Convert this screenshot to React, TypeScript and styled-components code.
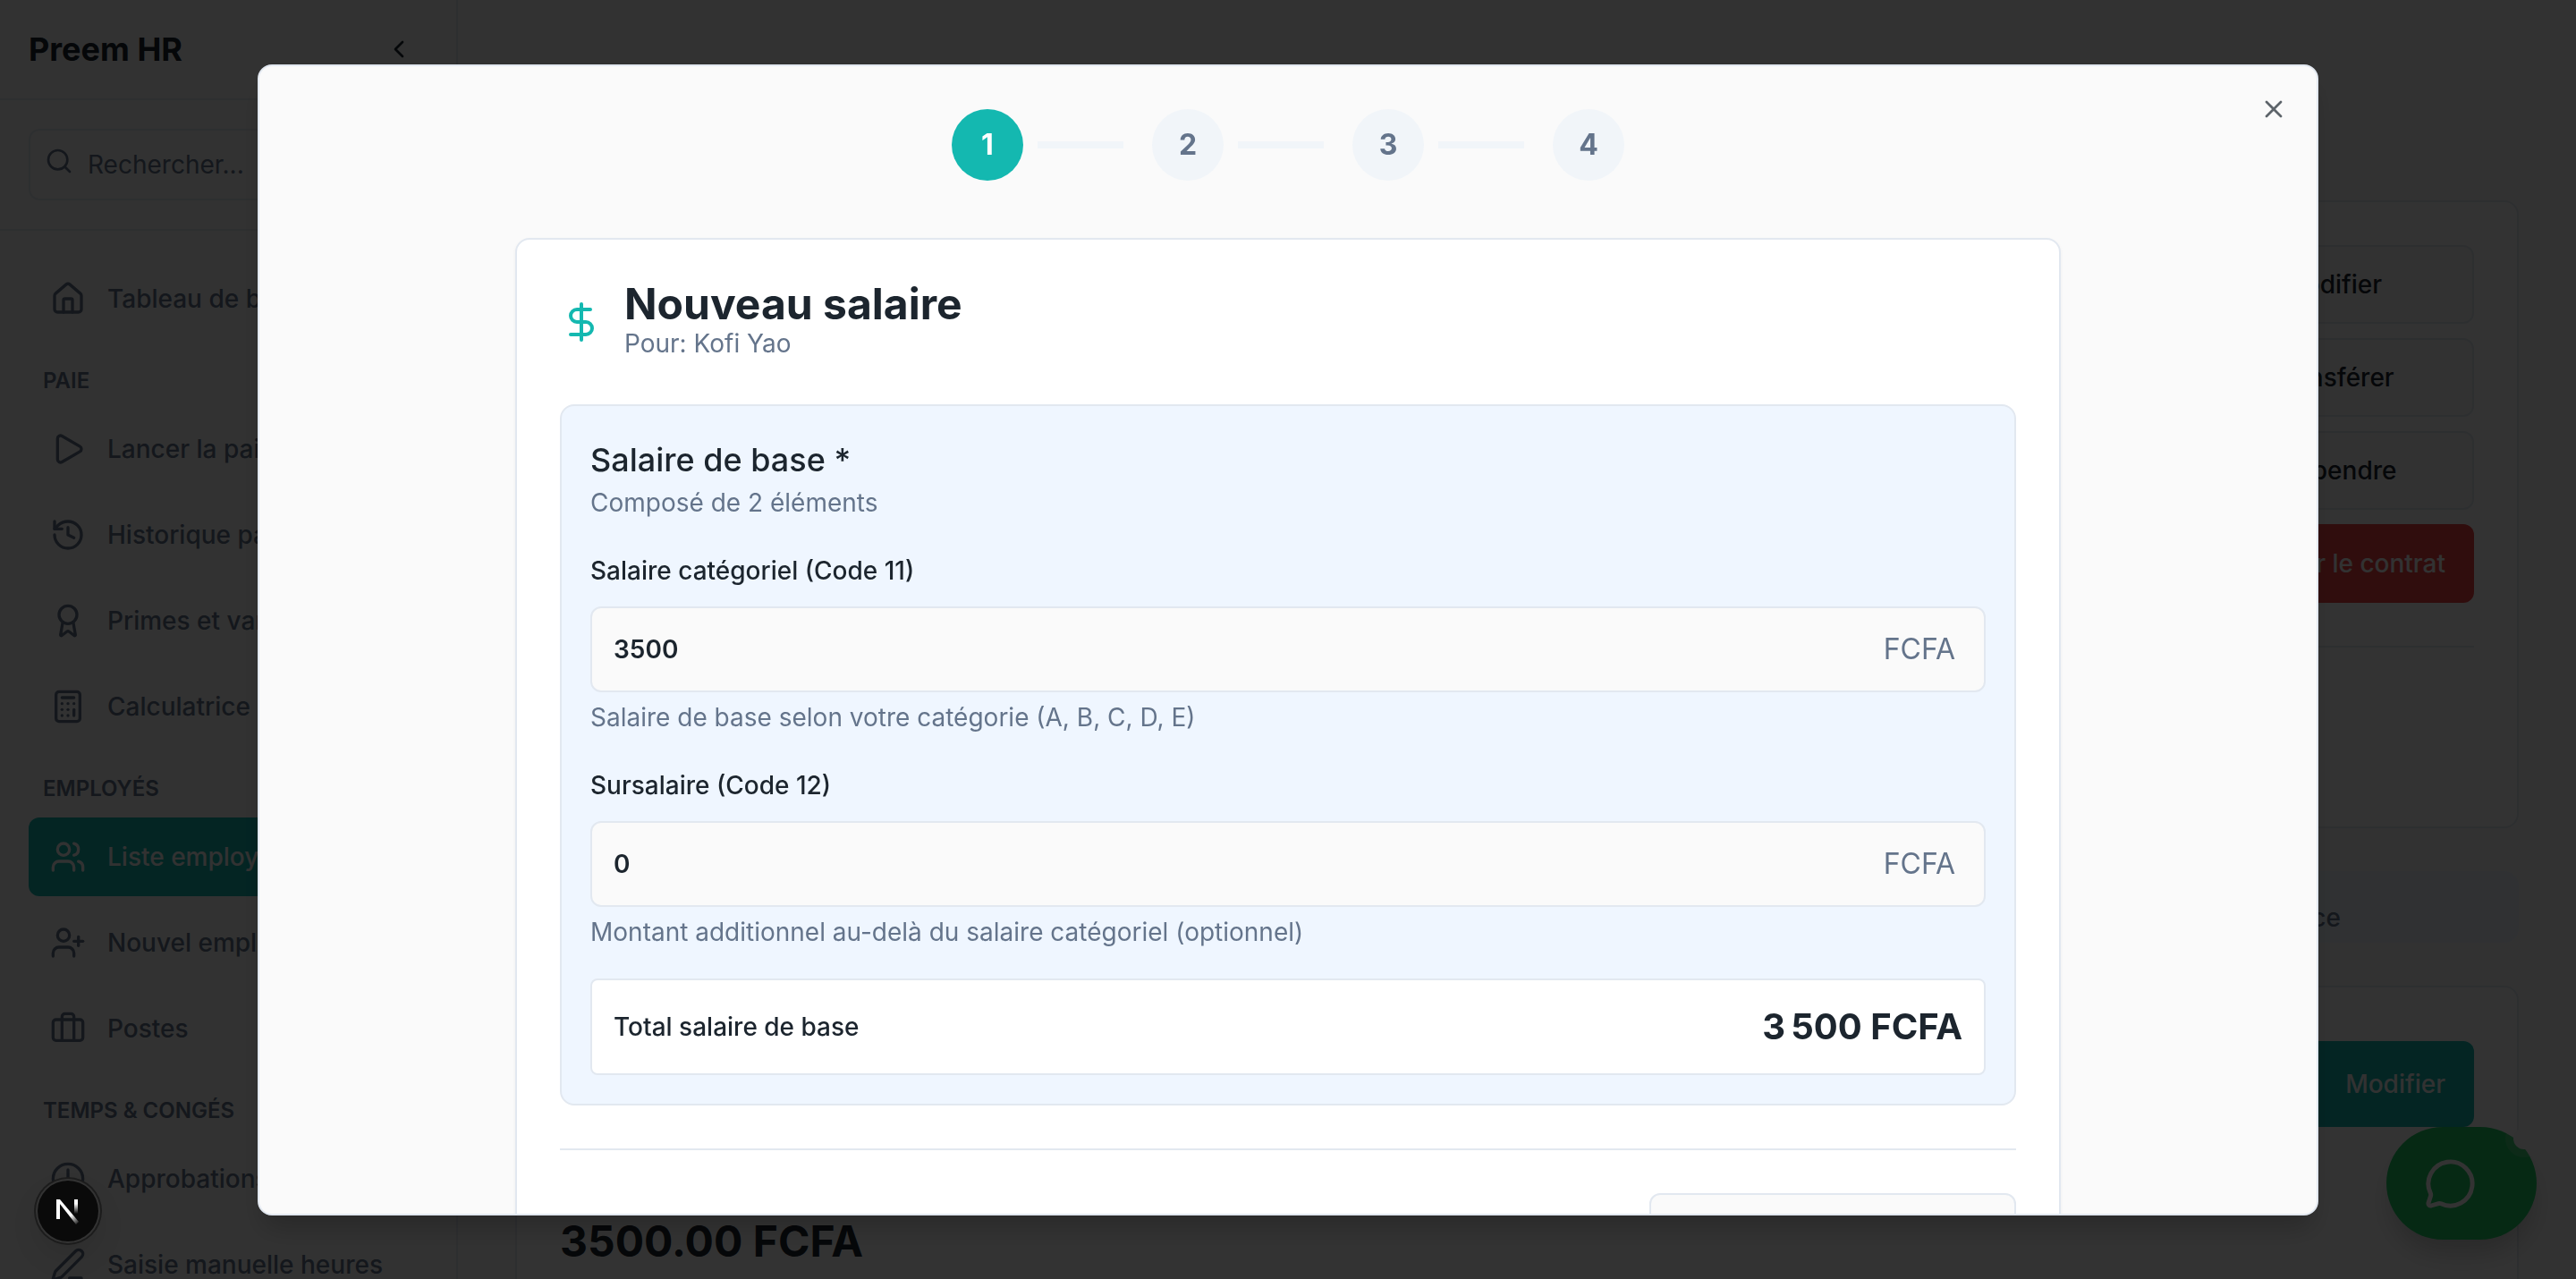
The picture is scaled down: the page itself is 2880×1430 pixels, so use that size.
import React from "react";
import styled, { createGlobalStyle, css } from "styled-components";
import {
  ArrowRightLeft,
  Award,
  Ban,
  Briefcase,
  Calculator,
  ChevronLeft,
  Clock,
  DollarSign,
  History,
  House,
  type LucideIcon,
  MessageCircle,
  Pencil,
  PenLine,
  Play,
  Plus,
  Search,
  UserPlus,
  Users,
  UserX,
  X,
} from "lucide-react";

const color = {
  page: "#fafafa",
  card: "#ffffff",
  ink: "#1c252e",
  muted: "#64748b",
  line: "#e2e8f0",
  soft: "#f1f5f9",
  teal: "#14b8b0",
  tint: "#eff6ff",
  danger: "#ef4444",
  chat: "#22cc66",
};

const GlobalStyle = createGlobalStyle`
  *, *::before, *::after { box-sizing: border-box; }
  body {
    margin: 0;
    background: ${color.page};
    color: ${color.ink};
    font-family: Inter, "Liberation Sans", sans-serif;
    font-size: 28px;
    line-height: 40px;
  }
  h1, h2, h3, p { margin: 0; }
  button, input { font: inherit; color: inherit; }
  button { cursor: pointer; }
  svg { flex-shrink: 0; display: block; }
`;

/* ---------- Application shell ---------- */

const Shell = styled.div`
  display: flex;
  height: 100vh;
  overflow: hidden;
`;

const Sidebar = styled.aside`
  flex: 0 0 512px;
  display: flex;
  flex-direction: column;
  border-right: 2px solid ${color.line};
  overflow: hidden;
`;

const SidebarHeader = styled.header`
  flex: none;
  display: flex;
  align-items: center;
  justify-content: space-between;
  height: 112px;
  padding: 0 32px;
  border-bottom: 2px solid ${color.line};
`;

const Brand = styled.h1`
  font-size: 36px;
  line-height: 56px;
  font-weight: 700;
`;

const CollapseButton = styled.button`
  display: grid;
  place-items: center;
  width: 64px;
  height: 64px;
  padding: 0;
  border: 0;
  border-radius: 12px;
  background: none;
`;

const SearchBlock = styled.div`
  flex: none;
  padding: 32px;
  border-bottom: 2px solid ${color.line};
`;

const SearchBox = styled.label`
  display: flex;
  align-items: center;
  gap: 16px;
  height: 80px;
  padding: 0 16px;
  border: 2px solid ${color.line};
  border-radius: 12px;
  color: ${color.muted};

  svg {
    margin-bottom: 8px;
  }
`;

const SearchInput = styled.input`
  flex: 1;
  min-width: 0;
  padding: 0;
  border: 0;
  outline: 0;
  background: none;

  &::placeholder {
    color: ${color.muted};
    opacity: 1;
  }
`;

const Nav = styled.nav`
  display: flex;
  flex-direction: column;
  gap: 32px;
  padding: 32px;
`;

const NavSection = styled.section`
  display: flex;
  flex-direction: column;
  gap: 16px;
`;

const NavTitle = styled.h2`
  padding: 0 16px;
  font-size: 24px;
  line-height: 32px;
  font-weight: 600;
  color: ${color.muted};
`;

const NavList = styled.div`
  display: flex;
  flex-direction: column;
  gap: 8px;
`;

const NavLink = styled.a<{ $active?: boolean }>`
  display: flex;
  align-items: center;
  gap: 24px;
  height: 88px;
  padding: 0 24px;
  border-radius: 12px;
  font-weight: 500;
  white-space: nowrap;
  text-decoration: none;
  color: ${(p) => (p.$active ? color.page : color.muted)};
  background: ${(p) => (p.$active ? color.teal : "none")};
`;

const Main = styled.main`
  flex: 1;
  min-width: 0;
  display: flex;
  flex-direction: column;
  gap: 48px;
  padding: 64px;
  overflow: hidden;
`;

const PageHeading = styled.h2`
  font-size: 48px;
  line-height: 112px;
`;

const PageCard = styled.section`
  display: flex;
  flex-direction: column;
  gap: 48px;
  padding: 48px;
  background: ${color.card};
  border: 2px solid ${color.line};
  border-radius: 16px;
`;

const ActionStack = styled.div`
  align-self: flex-end;
  display: grid;
  gap: 16px;
`;

const PageButton = styled.button<{ $tone?: "teal" | "danger"; $tall?: boolean }>`
  display: flex;
  align-items: center;
  justify-content: center;
  gap: 16px;
  height: ${(p) => (p.$tall ? 96 : 88)}px;
  min-width: 208px;
  padding: 0 32px;
  border: 2px solid ${color.line};
  border-radius: 12px;
  background: ${color.page};
  font-weight: 500;
  white-space: nowrap;
  ${(p) =>
    p.$tone &&
    css`
      border: 0;
      justify-content: flex-end;
      color: ${color.page};
      background: ${p.$tone === "teal" ? color.teal : color.danger};
    `}
`;

const CardFacts = styled.div`
  min-height: 154px;
  padding-top: 48px;
  border-top: 2px solid ${color.line};
`;

const TabBar = styled.div`
  flex: none;
  display: grid;
  grid-template-columns: repeat(4, 1fr);
  align-items: start;
  height: 80px;
  padding: 8px;
  border-radius: 16px;
  background: ${color.tint};
`;

const Tab = styled.button`
  height: 88px;
  padding: 0;
  border: 0;
  background: none;
  font-weight: 500;
  color: ${color.muted};
`;

const CardHead = styled.div`
  display: flex;
  align-items: center;
  justify-content: space-between;
  height: 120px;
`;

const SalaryFact = styled.div`
  color: ${color.muted};
`;

const SalaryAmount = styled.p`
  font-size: 48px;
  line-height: 56px;
  font-weight: 700;
  color: ${color.ink};
`;

/* ---------- Floating buttons ---------- */

const ChatButton = styled.button`
  position: fixed;
  right: 44px;
  bottom: 44px;
  display: flex;
  align-items: center;
  width: 168px;
  height: 126px;
  padding: 0 42px;
  border: 0;
  border-radius: 63px;
  color: ${color.card};
  background: ${color.chat};
  box-shadow: 0 20px 30px -6px rgba(0, 0, 0, 0.2);
`;

const ChatDot = styled.span`
  position: absolute;
  top: 1px;
  right: 2px;
  width: 24px;
  height: 24px;
  border-radius: 50%;
  background: ${color.page};
  box-shadow: 0 0 0 9px rgba(250, 250, 250, 0.14);
`;

const DevBadge = styled.button`
  position: fixed;
  left: 42px;
  bottom: 42px;
  z-index: 30;
  display: grid;
  place-items: center;
  width: 68px;
  height: 68px;
  padding: 0;
  border: 0;
  border-radius: 50%;
  background: #0a0a0a;
  box-shadow: 0 0 0 2px #333333, 0 0 0 4px #1c1c1c, 0 16px 32px rgba(0, 0, 0, 0.1);
`;

/* ---------- Dialog ---------- */

const Overlay = styled.div`
  position: fixed;
  inset: 0;
  z-index: 20;
  display: grid;
  place-items: center;
  background: rgba(0, 0, 0, 0.8);
`;

const Dialog = styled.div`
  position: relative;
  width: 80vw;
  height: 90vh;
  padding: 48px;
  overflow: hidden;
  background: ${color.page};
  border: 2px solid ${color.line};
  border-radius: 16px;
  box-shadow: 0 20px 30px -6px rgba(0, 0, 0, 0.2);
`;

const CloseButton = styled.button`
  position: absolute;
  top: 32px;
  right: 32px;
  padding: 0;
  border: 0;
  background: none;
  color: ${color.ink};
  opacity: 0.7;
`;

const DialogBody = styled.div`
  display: flex;
  flex-direction: column;
  gap: 64px;
  width: 100%;
  max-width: 1728px;
  margin: 0 auto;
`;

const Steps = styled.ol`
  display: flex;
  justify-content: center;
  gap: 32px;
  margin: 0;
  padding: 0;
  list-style: none;
`;

const Step = styled.li<{ $active?: boolean }>`
  display: flex;
  align-items: center;
  gap: 16px;

  span {
    display: grid;
    place-items: center;
    width: 80px;
    height: 80px;
    border-radius: 50%;
    font-size: 32px;
    font-weight: 700;
    color: ${(p) => (p.$active ? color.card : color.muted)};
    background: ${(p) => (p.$active ? color.teal : color.soft)};
  }

  &:not(:last-child)::after {
    content: "";
    width: 96px;
    height: 8px;
    background: ${color.soft};
  }
`;

const FormCard = styled.form`
  display: flex;
  flex-direction: column;
  gap: 48px;
  padding: 48px;
  background: ${color.card};
  border: 2px solid ${color.line};
  border-radius: 16px;
  box-shadow: 0 2px 4px rgba(0, 0, 0, 0.05);
`;

const FormHeader = styled.header`
  display: flex;
  align-items: center;
  gap: 24px;

  > svg {
    color: ${color.teal};
  }
`;

const FormTitle = styled.h2`
  font-size: 48px;
  line-height: 48px;
  font-weight: 700;
`;

const Hint = styled.p`
  color: ${color.muted};
`;

const SalaryBox = styled.section`
  display: flex;
  flex-direction: column;
  gap: 32px;
  padding: 32px;
  background: ${color.tint};
  border: 2px solid ${color.line};
  border-radius: 16px;
`;

const BoxTitle = styled.h3`
  font-size: 36px;
  line-height: 56px;
  font-weight: 500;
`;

const FieldLabel = styled.label`
  display: block;
  margin-bottom: 16px;
  line-height: 48px;
  font-weight: 500;
`;

const AmountBox = styled.div`
  display: flex;
  align-items: center;
  height: 96px;
  margin-bottom: 8px;
  padding: 0 32px 0 24px;
  background: ${color.page};
  border: 2px solid ${color.line};
  border-radius: 12px;
  font-size: 32px;
  color: ${color.muted};
`;

const AmountInput = styled.input`
  flex: 1;
  min-width: 0;
  padding: 0;
  border: 0;
  outline: 0;
  background: none;
  font-size: 28px;
  font-weight: 600;
  color: ${color.ink};
`;

const TotalRow = styled.div`
  display: flex;
  align-items: center;
  justify-content: space-between;
  padding: 24px;
  background: ${color.card};
  border: 2px solid ${color.line};
  border-radius: 8px;
  line-height: 56px;
  font-weight: 500;

  strong {
    font-size: 40px;
    font-weight: 700;
  }
`;

const AllowanceRow = styled.div`
  display: flex;
  align-items: center;
  justify-content: space-between;
  padding-top: 48px;
  border-top: 2px solid ${color.line};
`;

const AllowanceTitle = styled.h3`
  font-size: 32px;
  line-height: 48px;
  font-weight: 500;
`;

const AddButton = styled.button`
  display: flex;
  align-items: center;
  gap: 16px;
  height: 80px;
  padding: 0 32px;
  border: 2px solid ${color.line};
  border-radius: 12px;
  background: ${color.page};
  font-weight: 500;
`;

/* ---------- Content ---------- */

type NavEntry = { label: string; icon: LucideIcon; active?: boolean };

const navigation: { title?: string; items: NavEntry[] }[] = [
  { items: [{ label: "Tableau de bord", icon: House }] },
  {
    title: "PAIE",
    items: [
      { label: "Lancer la paie", icon: Play },
      { label: "Historique paie", icon: History },
      { label: "Primes et variables", icon: Award },
      { label: "Calculatrice", icon: Calculator },
    ],
  },
  {
    title: "EMPLOYÉS",
    items: [
      { label: "Liste employés", icon: Users, active: true },
      { label: "Nouvel employé", icon: UserPlus },
      { label: "Postes", icon: Briefcase },
    ],
  },
  {
    title: "TEMPS & CONGÉS",
    items: [
      { label: "Approbations", icon: Clock },
      { label: "Saisie manuelle heures", icon: PenLine },
    ],
  },
];

const fields = [
  {
    id: "base",
    label: "Salaire catégoriel (Code 11)",
    value: "3500",
    hint: "Salaire de base selon votre catégorie (A, B, C, D, E)",
  },
  {
    id: "extra",
    label: "Sursalaire (Code 12)",
    value: "0",
    hint: "Montant additionnel au-delà du salaire catégoriel (optionnel)",
  },
];

const NextLogo = () => (
  <svg width="28" height="30" viewBox="0 0 28 30" fill="none" aria-hidden="true">
    <defs>
      <linearGradient id="stem" x1="0" y1="0" x2="0" y2="1">
        <stop offset="0.3" stopColor="#fff" />
        <stop offset="1" stopColor="#fff" stopOpacity="0" />
      </linearGradient>
      <linearGradient id="slash" x1="14" y1="15" x2="26" y2="30" gradientUnits="userSpaceOnUse">
        <stop offset="0.3" stopColor="#fff" />
        <stop offset="1" stopColor="#fff" stopOpacity="0" />
      </linearGradient>
    </defs>
    <rect x="1" y="2" width="4" height="22" fill="#fff" />
    <polygon points="1,2 5,2 26,27 23,30" fill="url(#slash)" />
    <rect x="21" y="2" width="4" height="16" fill="url(#stem)" />
  </svg>
);

export default function App() {
  return (
    <>
      <GlobalStyle />
      <Shell>
        <Sidebar>
          <SidebarHeader>
            <Brand>Preem HR</Brand>
            <CollapseButton aria-label="Réduire le menu">
              <ChevronLeft size={32} />
            </CollapseButton>
          </SidebarHeader>
          <SearchBlock>
            <SearchBox>
              <Search size={32} />
              <SearchInput type="search" placeholder="Rechercher..." aria-label="Rechercher" />
            </SearchBox>
          </SearchBlock>
          <Nav>
            {navigation.map((section, index) => (
              <NavSection key={index}>
                {section.title && <NavTitle>{section.title}</NavTitle>}
                <NavList>
                  {section.items.map(({ label, icon: Icon, active }) => (
                    <NavLink key={label} href="#" $active={active}>
                      <Icon size={40} />
                      {label}
                    </NavLink>
                  ))}
                </NavList>
              </NavSection>
            ))}
          </Nav>
        </Sidebar>

        <Main>
          <PageHeading>Kofi Yao</PageHeading>
          <PageCard>
            <ActionStack>
              <PageButton>
                <Pencil size={32} />
                Modifier
              </PageButton>
              <PageButton>
                <ArrowRightLeft size={32} />
                Transférer
              </PageButton>
              <PageButton>
                <Ban size={32} />
                Suspendre
              </PageButton>
              <PageButton $tone="danger">
                <UserX size={32} />
                Terminer le contrat
              </PageButton>
            </ActionStack>
            <CardFacts />
          </PageCard>
          <TabBar>
            <Tab>Informations</Tab>
            <Tab>Salaire</Tab>
            <Tab>Documents</Tab>
            <Tab>Performance</Tab>
          </TabBar>
          <PageCard>
            <CardHead>
              <AllowanceTitle>Salaire actuel</AllowanceTitle>
              <PageButton $tone="teal" $tall>
                Modifier
              </PageButton>
            </CardHead>
            <SalaryFact>
              Salaire de base
              <SalaryAmount>3500.00 FCFA</SalaryAmount>
            </SalaryFact>
          </PageCard>
        </Main>
      </Shell>

      <ChatButton aria-label="Ouvrir la discussion">
        <MessageCircle size={59} />
        <ChatDot />
      </ChatButton>

      <Overlay>
        <Dialog role="dialog" aria-modal="true" aria-labelledby="dialog-title">
          <DialogBody>
            <Steps>
              {[1, 2, 3, 4].map((n) => (
                <Step key={n} $active={n === 1}>
                  <span>{n}</span>
                </Step>
              ))}
            </Steps>
            <FormCard>
              <FormHeader>
                <DollarSign size={48} />
                <div>
                  <FormTitle id="dialog-title">Nouveau salaire</FormTitle>
                  <Hint>Pour: Kofi Yao</Hint>
                </div>
              </FormHeader>
              <SalaryBox>
                <div>
                  <BoxTitle>Salaire de base *</BoxTitle>
                  <Hint>Composé de 2 éléments</Hint>
                </div>
                {fields.map((f) => (
                  <div key={f.id}>
                    <FieldLabel htmlFor={f.id}>{f.label}</FieldLabel>
                    <AmountBox>
                      <AmountInput id={f.id} inputMode="numeric" defaultValue={f.value} />
                      FCFA
                    </AmountBox>
                    <Hint>{f.hint}</Hint>
                  </div>
                ))}
                <TotalRow>
                  Total salaire de base
                  <strong>{"3\u202f500 FCFA"}</strong>
                </TotalRow>
              </SalaryBox>
              <AllowanceRow>
                <AllowanceTitle>Indemnités (optionnel)</AllowanceTitle>
                <AddButton type="button">
                  <Plus size={32} />
                  Ajouter une indemnité
                </AddButton>
              </AllowanceRow>
            </FormCard>
          </DialogBody>
          <CloseButton aria-label="Fermer">
            <X size={32} />
          </CloseButton>
        </Dialog>
      </Overlay>

      <DevBadge aria-label="Outils de développement">
        <NextLogo />
      </DevBadge>
    </>
  );
}
